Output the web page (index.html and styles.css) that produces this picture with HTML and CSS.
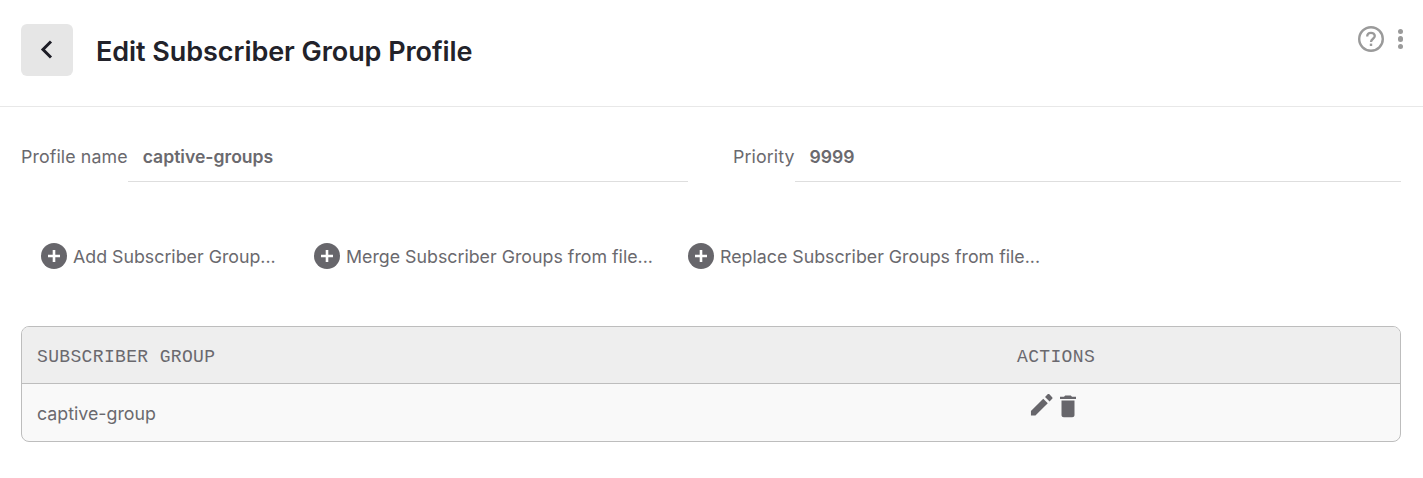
FILE: index.html
```html
<!DOCTYPE html>
<html>
<head>
  <meta charset="UTF-8" />
  <title>Edit Subscriber Group Profile</title>
  <link rel="stylesheet" href="styles.css">
</head>
<body>

<header class="page-header">
  <button class="back-btn">
    <svg width="24" height="24" viewBox="0 0 24 24"><path d="M16 3.500 8 11.500l8 8" fill="none" stroke="#1d1d26" stroke-width="3"/></svg>
  </button>
  <h1 class="page-title">Edit Subscriber Group Profile</h1>
  <div class="header-icons">
    <svg width="26" height="26" viewBox="0 0 26 26">
      <circle cx="13" cy="13" r="11.800" fill="none" stroke="#9a9a9a" stroke-width="2.400"/>
      <path d="M9.200 10.400c0-2.200 1.700-3.600 3.800-3.600s3.800 1.400 3.800 3.300c0 2.600-3.800 2.800-3.800 5.800" fill="none" stroke="#9a9a9a" stroke-width="2.300"/>
      <rect x="11.800" y="17.600" width="2.400" height="2.400" fill="#9a9a9a"/>
    </svg>
    <div class="kebab"><span></span><span></span><span></span></div>
  </div>
</header>

<div class="fields">
  <div class="field field-name">
    <label>Profile name</label>
    <div class="field-value">captive-groups</div>
  </div>
  <div class="field field-priority">
    <label>Priority</label>
    <div class="field-value">9999</div>
  </div>
</div>

<div class="actions-bar">
  <a class="add-btn add-first">
    <svg class="plus" width="26" height="26" viewBox="0 0 26 26"><circle cx="13" cy="13" r="13" fill="#67666b"/><path d="M13 7v12M7 13h12" stroke="#fff" stroke-width="2.600"/></svg>
    Add Subscriber Group...
  </a>
  <a class="add-btn add-second">
    <svg class="plus" width="26" height="26" viewBox="0 0 26 26"><circle cx="13" cy="13" r="13" fill="#67666b"/><path d="M13 7v12M7 13h12" stroke="#fff" stroke-width="2.600"/></svg>
    Merge Subscriber Groups from file...
  </a>
  <a class="add-btn">
    <svg class="plus" width="26" height="26" viewBox="0 0 26 26"><circle cx="13" cy="13" r="13" fill="#67666b"/><path d="M13 7v12M7 13h12" stroke="#fff" stroke-width="2.600"/></svg>
    Replace Subscriber Groups from file...
  </a>
</div>

<div class="group-table">
  <div class="table-head">
    <div class="col-name">SUBSCRIBER GROUP</div>
    <div class="col-actions">ACTIONS</div>
  </div>
  <div class="table-row">
    <div class="col-name">captive-group</div>
    <div class="col-actions row-icons">
      <svg width="24" height="24" viewBox="0 0 24 24"><path fill="#67666b" d="M1 19.200V24h4.800L18.900 10.900l-4.800-4.800L1 19.200zM23.600 6.200c.5-.5.5-1.300 0-1.800l-3-3c-.5-.5-1.300-.5-1.800 0l-2.800 2.800 4.800 4.800 2.800-2.800z" transform="translate(1 -1) scale(.94)"/></svg>
      <svg width="24" height="24" viewBox="0 0 24 24"><path fill="#67666b" d="M5.500 21c0 1.300 1 2.300 2.300 2.300h8.400c1.300 0 2.300-1 2.300-2.300V6.500h-13V21zM20 2.800h-4L14.800 1.600H9.200L8 2.800H4v2.300h16V2.800z"/></svg>
    </div>
  </div>
</div>

</body>
</html>
```

FILE: styles.css
```css
* {
  box-sizing: border-box;
}

body {
  margin: 0;
  background: #fff;
  font-family: 'Inter', sans-serif;
  color: #6a696e;
}

.page-header {
  display: flex;
  align-items: flex-start;
  height: 107px;
  padding: 24px 21px 0;
  border-bottom: 1px solid #e8e8e8;
}

.back-btn {
  display: flex;
  align-items: center;
  justify-content: center;
  width: 52px;
  height: 52px;
  padding: 0;
  border: 0;
  border-radius: 6px;
  background: #e6e6e6;
}

.page-title {
  margin: 0 0 0 23px;
  font-size: 27px;
  line-height: 55px;
  font-weight: 600;
  letter-spacing: -0.06px;
  color: #22222a;
}

.header-icons {
  display: flex;
  align-items: center;
  gap: 14px;
  margin: 2px -1px 0 auto;
}

.kebab {
  display: flex;
  flex-direction: column;
  gap: 2px;
}

.kebab span {
  width: 5.500px;
  height: 5.500px;
  border-radius: 50%;
  background: #9a9a9a;
}

.fields {
  display: flex;
  padding: 25px 22px 0 21px;
}

.field {
  display: flex;
  align-items: stretch;
  height: 50px;
  font-size: 17.800px;
  line-height: 50px;
}

.field label { letter-spacing: 0.1px; }

.field-name { width: 667px; }
.field-priority { flex: 1; margin-left: 45px; }

.field-value {
  flex: 1;
  padding-left: 15px;
  font-size: 17.600px;
  font-weight: 600;
  border-bottom: 1px solid #dedede;
}

.actions-bar {
  display: flex;
  align-items: center;
  height: 26px;
  margin-top: 61px;
  padding-left: 41px;
  font-size: 17.800px;
}

.add-btn {
  display: flex;
  align-items: center;
  gap: 6px;
}

.add-first { width: 273px; }
.add-second { width: 374px; }

.group-table {
  margin: 57px 22px 0 21px;
  border: 1px solid #bdbdbd;
  border-radius: 8px;
  overflow: hidden;
  background: #f9f9f9;
}

.table-head {
  display: flex;
  align-items: center;
  height: 57px;
  padding-top: 3px;
  background: #eeeeee;
  border-bottom: 1px solid #bdbdbd;
  font-family: 'Liberation Mono', monospace;
  font-size: 18px;
  letter-spacing: 0.35px;
}

.table-row {
  display: flex;
  height: 57px;
  font-size: 17.800px;
  line-height: 59px;
}

.col-name {
  width: 995px;
  padding-left: 15px;
}

.row-icons {
  display: flex;
  gap: 3px;
  padding: 10px 0 0 12px;
}
```
